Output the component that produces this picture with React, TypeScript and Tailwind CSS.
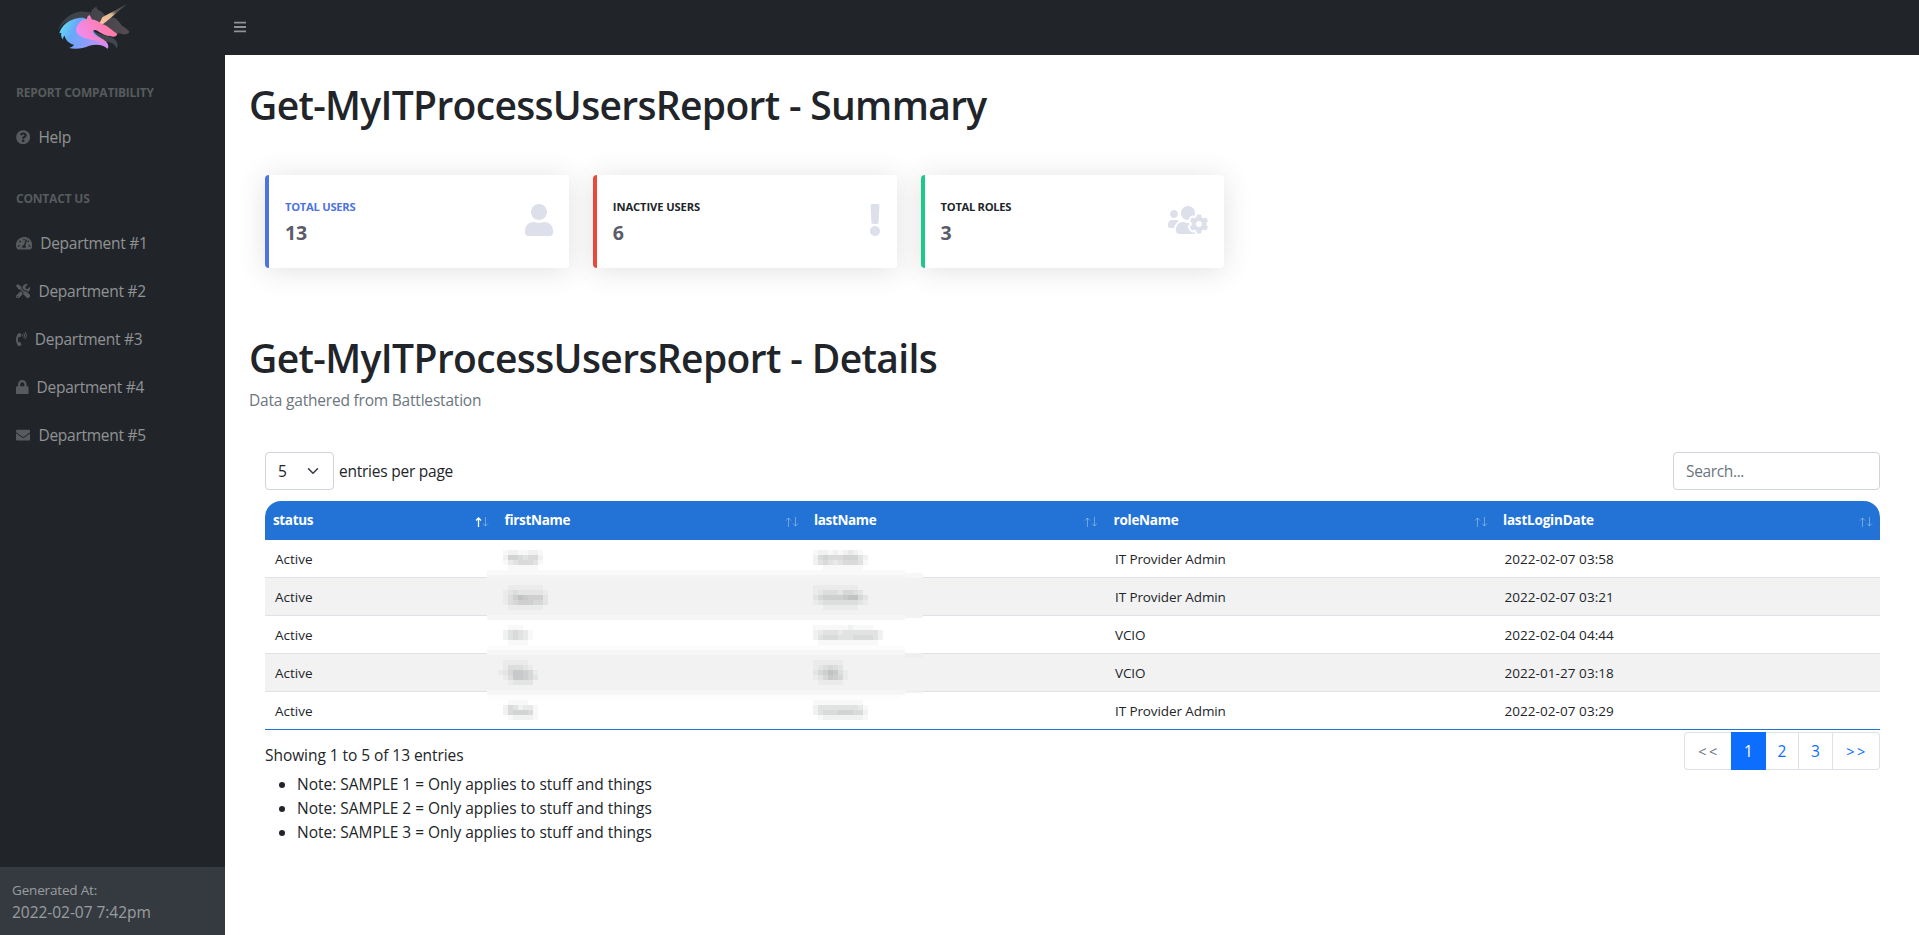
import type { ReactNode } from "react";
import {
  FaBars,
  FaEnvelope,
  FaExclamation,
  FaLock,
  FaPhoneVolume,
  FaQuestionCircle,
  FaTachometerAlt,
  FaTools,
  FaUser,
  FaUsersCog,
} from "react-icons/fa";

function Logo() {
  return (
    <svg viewBox="171 0 222 162" className="h-[54px] w-[74px]" aria-hidden="true">
      <defs>
        <linearGradient id="shade" x1="0" x2="1" y1="0" y2="0">
          <stop offset="0" stopColor="#39434c" />
          <stop offset="0.45" stopColor="#424349" />
          <stop offset="1" stopColor="#524c51" />
        </linearGradient>
        <linearGradient id="mane" x1="0" x2="1" y1="0.3" y2="0.6">
          <stop offset="0" stopColor="#5fe0f0" />
          <stop offset="0.3" stopColor="#68a8fb" />
          <stop offset="0.65" stopColor="#8f9cf8" />
          <stop offset="1" stopColor="#d98cf2" />
        </linearGradient>
        <linearGradient id="face" x1="0" x2="1" y1="0.7" y2="0.3">
          <stop offset="0" stopColor="#ee8cf4" />
          <stop offset="0.5" stopColor="#fb82c0" />
          <stop offset="1" stopColor="#ff7898" />
        </linearGradient>
        <linearGradient id="horn" x1="0" x2="1" y1="1" y2="0">
          <stop offset="0" stopColor="#ffc2a0" />
          <stop offset="0.45" stopColor="#e0bd98" />
          <stop offset="0.6" stopColor="#5d5653" />
          <stop offset="1" stopColor="#4c4947" />
        </linearGradient>
      </defs>
      <path
        fill="url(#shade)"
        d="M174 92C180 66 208 38 240 35C254 34 262 37 272 38C275 29 281 23 289 20C290 27 295 31 303 34L320 50L345 54C354 60 360 70 366 77C376 84 385 88 388 95C385 102 376 105 366 102C352 97 345 104 340 98L300 76L262 50L200 90L180 98C186 80 194 68 204 62C192 68 182 78 174 92Z"
      />
      <path
        fill="#41474f"
        d="M274 86C282 98 308 104 330 110C350 117 358 132 350 146C346 132 332 124 316 126C292 120 272 106 274 86Z"
      />
      <path
        fill="url(#mane)"
        d="M178 100C184 78 206 58 236 54C246 52 256 54 264 58L280 84C276 110 318 114 324 134C326 140 324 145 322 146C312 134 288 132 268 137C250 145 228 149 207 144C214 142 219 139 222 134C205 130 196 118 194 107C190 110 188 114 190 119C184 113 182 106 184 98C182 98 180 99 178 100Z"
      />
      <path
        fill="url(#face)"
        d="M228 90C230 72 245 60 260 58C261 51 264 47 268 45C272 49 274 54 275 58C288 61 300 66 306 72C324 76 332 90 352 101C351 109 340 113 332 108C318 108 304 101 292 92C286 88 276 90 276 97C280 112 312 116 322 130C300 120 266 122 248 112C236 106 228 100 228 90Z"
      />
      <path fill="url(#horn)" d="M299 69L307 52L381 12L320 64L308 73Z" />
    </svg>
  );
}

function NavHeading({ children, tracking }: { children: ReactNode; tracking: string }) {
  return (
    <div className={`px-4 pt-[29px] pb-[11px] text-[12px] leading-[18px] font-bold text-white/25 ${tracking}`}>
      {children}
    </div>
  );
}

function NavLink({ icon, label }: { icon: ReactNode; label: string }) {
  return (
    <a className="flex h-12 items-center gap-2 px-4 text-[15.5px] tracking-[-0.26px] text-white/50">
      <span className="text-[14.4px] text-white/25">{icon}</span>
      <span className="pt-[2px]">{label}</span>
    </a>
  );
}

type StatProps = { title: string; value: string; border: string; titleClass: string; icon: ReactNode };

function StatCard({ title, value, border, titleClass, icon }: StatProps) {
  return (
    <div
      className={`flex h-[93px] flex-1 items-center justify-between rounded-[4px] border-l-4 bg-white pr-4 pl-4 shadow-[0_2.4px_28px_rgba(58,59,69,0.15)] ${border}`}
    >
      <div>
        <div className={`mb-[6px] text-[11.2px] leading-[17px] font-bold ${titleClass}`}>{title}</div>
        <div className="text-[19.5px] leading-6 font-bold tracking-[-0.2px] text-[#5a5c69]">{value}</div>
      </div>
      <span className="pb-[4px] text-[#dddfeb]">{icon}</span>
    </div>
  );
}

function SortArrows({ active }: { active?: boolean }) {
  return (
    <svg viewBox="0 0 14 10" className="mt-[3px] h-[10px] w-[14px]" fill="none" stroke="#fff" aria-hidden="true">
      <path d="M3.5 10V1M1 3.5L3.5 1L6 3.5" strokeWidth={active ? 1.3 : 1} opacity={active ? 1 : 0.35} />
      <path d="M10.5 0V9M8 6.5L10.5 9L13 6.5" opacity={0.35} />
    </svg>
  );
}

const columns = [
  { name: "status", layout: "w-[231.5px] pr-[7.5px]", tracking: "tracking-[-0.35px]" },
  { name: "firstName", layout: "w-[309.5px] pr-[7.5px]", tracking: "tracking-[-0.3px]" },
  { name: "lastName", layout: "w-[299.5px] pr-[8px]", tracking: "tracking-[-0.36px]" },
  { name: "roleName", layout: "w-[389.5px] pr-[7px]", tracking: "tracking-[-0.24px]" },
  { name: "lastLoginDate", layout: "w-[385px] pr-[7px]", tracking: "tracking-[-0.2px]" },
];

const rows = [
  ["Active", "IT Provider Admin", "2022-02-07 03:58"],
  ["Active", "IT Provider Admin", "2022-02-07 03:21"],
  ["Active", "VCIO", "2022-02-04 04:44"],
  ["Active", "VCIO", "2022-01-27 03:18"],
  ["Active", "IT Provider Admin", "2022-02-07 03:29"],
];

// Darkness of each 5px cell of a redacted name, one digit per cell.
const mosaics: { x: number; y: number; cells: string[] }[] = [
  { x: 498, y: 550, cells: ["012211221", "026654552", "013455541", "001111110"] },
  { x: 498, y: 585, cells: ["0011111110", "0123222221", "0135765552", "0134555442", "0011111110"] },
  { x: 498, y: 625, cells: ["0011100", "0245431", "0245431", "0011110"] },
  { x: 498, y: 660, cells: ["01111100", "01333210", "12466541", "01366542", "00122220"] },
  { x: 498, y: 700, cells: ["00111100", "02542331", "02566651", "00122221"] },
  { x: 808, y: 550, cells: ["0122121232100", "0256555666420", "0245434555410", "0001111111100"] },
  { x: 808, y: 585, cells: ["0111111111000", "0123332443200", "0245555677420", "0123333333210", "0001111111000"] },
  { x: 808, y: 625, cells: ["0111111121111000", "0234443444444420", "0245554445555420", "0011111111111100"] },
  { x: 808, y: 660, cells: ["0111111000", "0123432000", "0245763100", "0124654100", "0011111000"] },
  { x: 808, y: 700, cells: ["0111111111100", "0244444444310", "0245556665520", "0012222222210"] },
];

const smears = [
  { x: 487, y: 570, w: 418, h: 5, fill: "#f9f9f9" },
  { x: 487, y: 575, w: 418, h: 5, fill: "#f4f4f4" },
  { x: 905, y: 573, w: 18, h: 5, fill: "#f7f7f7" },
  { x: 487, y: 610, w: 436, h: 6, fill: "#f2f2f2" },
  { x: 487, y: 615, w: 418, h: 5, fill: "#f6f6f6" },
  { x: 905, y: 615, w: 18, h: 3, fill: "#f3f3f3" },
  { x: 487, y: 645, w: 418, h: 5, fill: "#fcfcfc" },
  { x: 487, y: 650, w: 418, h: 5, fill: "#f6f6f6" },
  { x: 487, y: 655, w: 418, h: 4, fill: "#f2f2f2" },
  { x: 905, y: 653, w: 18, h: 5, fill: "#eeeeee" },
  { x: 487, y: 686, w: 418, h: 4, fill: "#f2f2f2" },
  { x: 487, y: 690, w: 418, h: 5, fill: "#f6f6f6" },
  { x: 487, y: 695, w: 412, h: 5, fill: "#fdfdfd" },
  { x: 905, y: 690, w: 18, h: 3, fill: "#f0f0f0" },
];

function Redaction() {
  return (
    <svg
      viewBox="485 545 440 180"
      shapeRendering="crispEdges"
      className="absolute top-[44px] left-[220px] h-[180px] w-[440px]"
      aria-hidden="true"
    >
      {smears.map((s, i) => (
        <rect key={i} x={s.x} y={s.y} width={s.w} height={s.h} fill={s.fill} />
      ))}
      {mosaics.flatMap((m, k) =>
        m.cells.flatMap((line, r) =>
          line
            .split("")
            .map((d, c) => (
              <rect
                key={`${k}-${r}-${c}`}
                x={m.x + c * 5}
                y={m.y + r * 5}
                width={5}
                height={5}
                fill="#303438"
                opacity={Number(d) * 0.036}
              />
            )),
        ),
      )}
    </svg>
  );
}

export default function App() {
  return (
    <div className="flex h-[935px] w-full overflow-hidden bg-white font-['Open_Sans','Noto_Sans',sans-serif] text-[#212529]">
      <aside className="flex w-[225px] shrink-0 flex-col bg-[#212529]">
        <div className="flex h-[55px] pl-[57px]">
          <Logo />
        </div>
        <nav className="flex-1">
          <NavHeading tracking="tracking-[-0.22px]">REPORT COMPATIBILITY</NavHeading>
          <NavLink icon={<FaQuestionCircle />} label="Help" />
          <NavHeading tracking="tracking-[-0.2px]">CONTACT US</NavHeading>
          <NavLink icon={<FaTachometerAlt className="h-[14.4px] w-[16.2px]" />} label="Department #1" />
          <NavLink icon={<FaTools />} label="Department #2" />
          <NavLink icon={<FaPhoneVolume className="h-[14.4px] w-[10.8px]" />} label="Department #3" />
          <NavLink icon={<FaLock className="h-[14.4px] w-[12.6px]" />} label="Department #4" />
          <NavLink icon={<FaEnvelope />} label="Department #5" />
        </nav>
        <footer className="h-[68px] bg-[#343a40] px-3 pt-[13px] text-white/50">
          <div className="text-[13.5px] leading-[20px] tracking-[-0.17px]">Generated At:</div>
          <div className="text-[15.5px] leading-6 tracking-[-0.04px]">2022-02-07 7:42pm</div>
        </footer>
      </aside>

      <div className="flex min-w-0 flex-1 flex-col">
        <header className="flex h-[55px] shrink-0 items-center bg-[#212529] pb-[2px] pl-[9px] text-white/50">
          <FaBars className="h-[14px] w-[12.25px]" />
        </header>

        <main className="px-6">
          <h1 className="mt-[26px] text-[39px] leading-[48px] font-semibold tracking-[-0.67px]">
            Get-MyITProcessUsersReport - Summary
          </h1>
          <div className="mt-[46px] ml-4 flex w-[959.4px] gap-6">
            <StatCard
              title="TOTAL USERS"
              value="13"
              border="border-[#4e73df]"
              titleClass="text-[#4e73df] tracking-[-0.26px]"
              icon={<FaUser className="h-8 w-7" />}
            />
            <StatCard
              title="INACTIVE USERS"
              value="6"
              border="border-[#e74a3b]"
              titleClass="tracking-[-0.1px]"
              icon={<FaExclamation className="h-8 w-3" />}
            />
            <StatCard
              title="TOTAL ROLES"
              value="3"
              border="border-[#1cc88a]"
              titleClass="tracking-[-0.3px]"
              icon={<FaUsersCog className="h-8 w-10" />}
            />
          </div>

          <h1 className="mt-[66px] text-[39px] leading-[48px] font-semibold tracking-[-0.62px]">
            Get-MyITProcessUsersReport - Details
          </h1>
          <p className="mt-[6px] text-[15.5px] leading-6 tracking-[-0.2px] text-[#6c757d]">
            Data gathered from Battlestation
          </p>

          <section className="mt-[40px] w-[1647px] px-4">
            <div className="flex items-center justify-between">
              <label className="flex items-center gap-[5px] text-[15.5px] tracking-[-0.24px]">
                <span className="flex h-[38px] w-[69px] items-center justify-between rounded-[4px] border border-[#ced4da] px-3">
                  <span className="pt-[2px]">5</span>
                  <svg viewBox="0 0 16 16" className="h-3 w-4" fill="none" stroke="#343a40" strokeWidth="2">
                    <path d="M2 5l6 6 6-6" strokeLinecap="round" strokeLinejoin="round" />
                  </svg>
                </span>
                <span className="pt-[2px]">entries per page</span>
              </label>
              <input
                placeholder="Search..."
                className="h-[38px] w-[207px] rounded-[4px] border border-[#ced4da] px-3 text-[15.5px] tracking-[-0.36px] placeholder:text-[#6c757d]"
              />
            </div>

            <div className="relative mt-[11px]">
              <table className="w-[1615px] table-fixed border-separate border-spacing-0 text-[13.5px]">
                <thead>
                  <tr>
                    {columns.map((c, i) => (
                      <th
                        key={c.name}
                        className={`h-[39px] bg-[#2273d5] py-0 pl-2 text-left font-bold text-white first:rounded-tl-[16px] last:rounded-tr-[16px] ${c.layout} ${c.tracking}`}
                      >
                        <div className="flex items-center justify-between">
                          {c.name}
                          <SortArrows active={i === 0} />
                        </div>
                      </th>
                    ))}
                  </tr>
                </thead>
                <tbody className="[&>tr:last-child>td]:border-[#2273d5] [&>tr:nth-child(even)]:bg-[#f2f2f2]">
                  {rows.map(([status, role, login], i) => (
                    <tr key={i}>
                      <td className="h-[38px] border-b border-[#dee2e6] p-0 pt-[2px] pl-[10px]">{status}</td>
                      <td className="border-b border-[#dee2e6]" />
                      <td className="border-b border-[#dee2e6]" />
                      <td className="border-b border-[#dee2e6] p-0 pt-[2px] pl-[9.5px] tracking-[-0.1px]">{role}</td>
                      <td className="border-b border-[#dee2e6] p-0 pt-[2px] pl-[9.5px] tracking-[0.06px]">{login}</td>
                    </tr>
                  ))}
                </tbody>
              </table>
              <Redaction />
            </div>

            <div className="mt-[2px] flex items-start justify-between">
              <div>
                <p className="pt-[11px] text-[15.5px] leading-6 tracking-[-0.06px]">Showing 1 to 5 of 13 entries</p>
                <ul className="mt-[5px] list-disc pl-8 text-[15.5px] leading-6 tracking-[-0.02px]">
                  <li>Note: SAMPLE 1 = Only applies to stuff and things</li>
                  <li>Note: SAMPLE 2 = Only applies to stuff and things</li>
                  <li>Note: SAMPLE 3 = Only applies to stuff and things</li>
                </ul>
              </div>
              <div className="flex h-[38px] text-[15.5px] text-[#0d6efd]">
                <span className="flex w-[47px] items-center justify-center rounded-l-[4px] border border-r-0 border-[#dee2e6] pt-[2px] pl-[2px] text-[14.5px] tracking-[2.5px] text-[#6c757d]">
                  &lt;&lt;
                </span>
                <span className="flex w-[35px] items-center justify-center bg-[#0d6efd] pt-[2px] text-white">1</span>
                <span className="flex w-[33px] items-center justify-center border border-l-0 border-[#dee2e6] pt-[2px]">
                  2
                </span>
                <span className="flex w-[34px] items-center justify-center border border-l-0 border-[#dee2e6] pt-[2px]">
                  3
                </span>
                <span className="flex w-[47px] items-center justify-center rounded-r-[4px] border border-l-0 border-[#dee2e6] pt-[2px] pl-[2px] text-[14.5px] tracking-[2.5px]">
                  &gt;&gt;
                </span>
              </div>
            </div>
          </section>
        </main>
      </div>
    </div>
  );
}
